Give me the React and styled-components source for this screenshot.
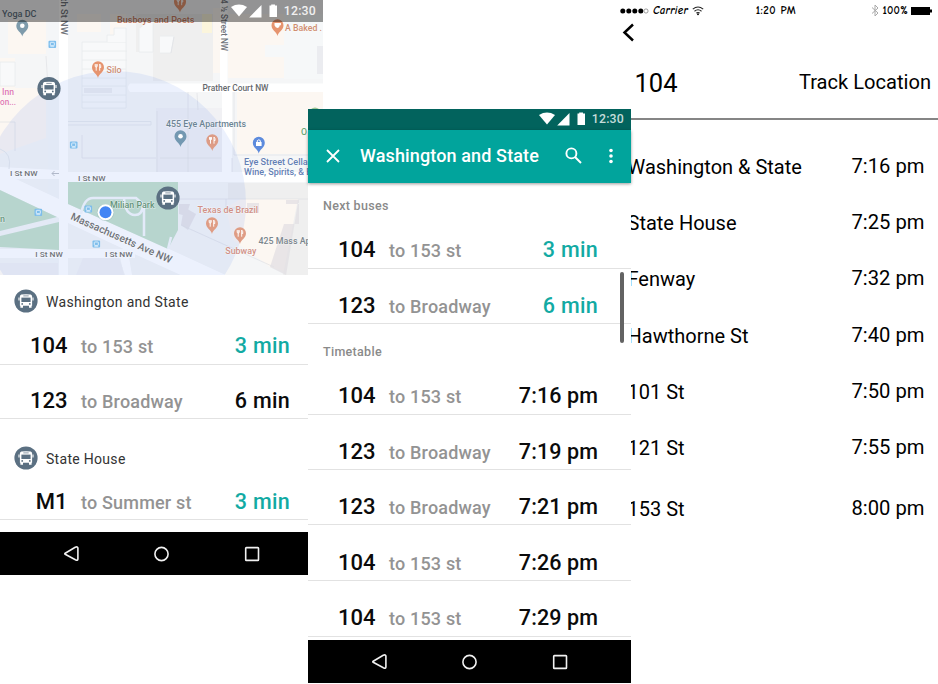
import React from "react";
import styled, { createGlobalStyle, css } from "styled-components";

const Global = createGlobalStyle`
  * { box-sizing: border-box; }
  body { margin: 0; background: #fff; overflow: hidden; font-family: Roboto, "Liberation Sans", sans-serif; }
`;

const Board = styled.main`
  display: grid;
  grid-template-columns: 308px 323px 307px;
  align-items: start;
  width: 938px;
  height: 684px;
  overflow: hidden;
`;

const NearbyPhone = styled.section`
  width: 323px;
  z-index: 1;
`;

const TimetablePhone = styled.section`
  width: 323px;
  margin-top: 109px;
  background: #fff;
  z-index: 2;
`;

const RoutePhone = styled.section`
  width: 322px;
  margin-left: -15px;
  color: #000;
`;

const MapStage = styled.div`
  display: grid;
  width: 323px;
  height: 275px;
  overflow: hidden;
  & > * { grid-area: 1 / 1; }
`;

const MapCanvas = styled.svg`
  display: block;
  width: 323px;
  height: 275px;
`;

const StatusBar = styled.div`
  display: flex;
  align-items: center;
  justify-content: flex-end;
  height: ${(p) => (p.$overMap ? 22 : 21)}px;
  padding: ${(p) => (p.$overMap ? "0 7px 0 0" : "0 7px 1px 0")};
  background: ${(p) => (p.$overMap ? "rgba(0, 0, 0, 0.4)" : "#02635d")};
  color: ${(p) => (p.$overMap ? "#f0f0f0" : "#c5dcda")};
  font-size: 12.3px;
  font-weight: 500;
  letter-spacing: 0.2px;
  svg { margin-right: 6px; }
`;

const Toolbar = styled.header`
  display: flex;
  align-items: center;
  height: 53px;
  padding: 0 17px 2px 18px;
  background: #01a49c;
  color: #fff;
  box-shadow: 0 1px 3px rgba(0, 0, 0, 0.4);
`;

const ToolbarTitle = styled.h1`
  margin: 0 0 0 20px;
  flex: 1;
  font-size: 18px;
  font-weight: 500;
  letter-spacing: 0.13px;
  white-space: nowrap;
`;

const SearchIcon = styled.svg`
  margin-right: 26px;
`;

const StopHeader = styled.div`
  display: flex;
  align-items: center;
  gap: 8px;
  height: ${(p) => p.$height}px;
  padding: ${(p) => p.$top}px 0 0 14px;
  color: #333;
  font-size: 14px;
  letter-spacing: 0.3px;
`;

const StopName = styled.span`
  padding-top: 2px;
`;

const GroupLabel = styled.div`
  height: ${(p) => p.$height}px;
  padding: ${(p) => p.$top}px 15px 0;
  color: #8a8a8a;
  font-size: 12.5px;
  font-weight: 500;
  letter-spacing: 0.3px;
  line-height: 16px;
`;

const DepartureRow = styled.div`
  display: flex;
  align-items: baseline;
  width: 323px;
  height: ${(p) => p.$height || 55.5}px;
  padding-top: ${(p) => (p.$height || 55.5) - 30.5}px;
  padding-right: 33px;
  border-bottom: 1px solid #e2e2e2;
  line-height: 24px;
  white-space: nowrap;
`;

const RouteNumber = styled.strong`
  width: 67.5px;
  color: #0b0b0b;
  text-align: right;
  font-size: 22px;
  font-weight: 500;
`;

const Destination = styled.span`
  flex: 1;
  margin-left: 13.5px;
  color: #939393;
  font-size: 18px;
  font-weight: 500;
  letter-spacing: 0.18px;
`;

const Departure = styled.span`
  color: ${(p) => (p.$live ? "#12aaa3" : "#0b0b0b")};
  font-size: 21.5px;
  font-weight: 500;
  letter-spacing: ${(p) => (p.$minutes ? 0.3 : 0.1)}px;
`;

const NavBar = styled.footer`
  display: flex;
  align-items: center;
  justify-content: space-between;
  width: 323px;
  height: 43px;
  padding: 0 62px;
  background: #000;
`;

const Gap = styled.div`
  height: ${(p) => p.$height}px;
`;

const ScrollBody = styled.div`
  display: grid;
  & > * { grid-area: 1 / 1; }
`;

const ScrollThumb = styled.div`
  justify-self: end;
  width: 4px;
  height: 71px;
  margin: 89px 7px 0 0;
  border-radius: 2px;
  background: #636363;
`;

const CarrierBar = styled.div`
  display: grid;
  grid-template-columns: 1fr auto 1fr;
  align-items: center;
  height: 21px;
  padding: 0 5px 0 3px;
  font-family: "Comic Sans MS", "Comic Neue", Lato, sans-serif;
  font-size: 11px;
  font-weight: 700;
`;

const Clock = styled.span`
  letter-spacing: 0.5px;
`;

const CarrierSide = styled.div`
  display: flex;
  align-items: center;
  gap: ${(p) => (p.$end ? 3 : 4)}px;
  justify-content: ${(p) => (p.$end ? "flex-end" : "flex-start")};
  letter-spacing: ${(p) => (p.$end ? 0.3 : 0.25)}px;
`;

const BackRow = styled.div`
  height: 30px;
  padding: 2px 0 0 5px;
`;

const RouteHeader = styled.header`
  display: flex;
  align-items: flex-start;
  justify-content: space-between;
  height: 69px;
  padding: 14px 7px 0 18.5px;
  border-bottom: 2px solid #858585;
  font-size: 20.1px;
  line-height: 36px;
`;

const TrackLink = styled.span`
  margin-top: -1px;
`;

const RouteTitle = styled.h2`
  margin: 0;
  font-size: 25.5px;
  font-weight: 400;
`;

const StopList = styled.div`
  display: flex;
  flex-direction: column;
  padding-top: 18.5px;
`;

const StopRow = styled.div`
  display: flex;
  justify-content: space-between;
  align-items: flex-start;
  height: 56.4px;
  padding: 0 13.5px 0 11.5px;
  font-size: 20px;
  line-height: 56px;
  ${(p) => p.$last && css`margin-top: 4px;`}
`;

const StopTime = styled.time`
  margin-top: -1px;
  font-size: 20.2px;
`;

function BusGlyph({ x, y }) {
  return (
    <g transform={`translate(${x} ${y})`}>
      <circle r="11.6" fill="#5b7082" />
      <path d="M-4.6-6.4Q0-7.2 4.6-6.4Q6.1-6 6.1-4.5V4.8H-6.1V-4.5Q-6.1-6 -4.6-6.4Z" fill="#fff" />
      <path d="M-5.6 4V6.8H-3V4M3 4V6.8H5.6V4" fill="#fff" />
      <path d="M-7-3.4V-.4M7-3.4V-.4" stroke="#fff" strokeWidth="1.1" />
      <path d="M-4.6-3.4H4.6V1H-4.6Z" fill="#5b7082" />
      <path d="M-2.7-5.1H2.7" stroke="#5b7082" strokeWidth=".7" />
      <circle cx="-3.8" cy="2.9" r=".9" fill="#5b7082" />
      <circle cx="3.8" cy="2.9" r=".9" fill="#5b7082" />
    </g>
  );
}

function Pin({ x, y, color = "#e6946f", kind = "food" }) {
  return (
    <g transform={`translate(${x} ${y})`}>
      <path d="M0 10.5C-.8 6.3-6 4.6-6-.3A6 6 0 0 1 6-.3C6 4.6.8 6.3 0 10.5Z" fill={color} />
      {kind === "food" && (
        <path d="M-2.8-3.4V-1Q-1.8.3-.8-1V-3.4M-1.8-3.4V3.2M1.7 3.2V-3.4Q3-2.5 2.8 0H1.7" fill="none" stroke="#fff" strokeWidth=".95" />
      )}
      {kind === "dot" && <circle r="2.3" cy="-.3" fill="#fff" />}
      {kind === "cup" && <path d="M-3-2.6H3.4V-.2H2.3Q2 2.4 0 2.4T-3-.2Z" fill="#fff" />}
      {kind === "bag" && (
        <g>
          <path d="M-2.8-1H2.8V3H-2.8Z" fill="#fff" />
          <path d="M-1.5-1V-2.4Q0-4 1.5-2.4V-1" fill="none" stroke="#fff" />
        </g>
      )}
    </g>
  );
}

function Transit({ x, y }) {
  return (
    <g transform={`translate(${x} ${y})`}>
      <rect x="-3.8" y="-3.6" width="7.6" height="7.2" rx="1" fill="#7dbdec" />
      <rect x="-2" y="-2" width="4" height="3.4" rx=".5" fill="none" stroke="#e5f3fd" strokeWidth=".9" />
      <path d="M-2 2.4H2" stroke="#e5f3fd" strokeWidth=".7" />
    </g>
  );
}

const MapLabel = styled.text`
  font-family: Roboto, sans-serif;
  font-size: ${(p) => p.$size || 8.5}px;
  font-weight: 500;
  fill: ${(p) => p.$color || "#6f737a"};
  paint-order: stroke;
  stroke: rgba(255, 255, 255, 0.55);
  stroke-width: 1px;
`;

const pins = [
  { x: 22.3, y: 26, color: "#7e9bab", kind: "dot" },
  { x: 180, y: 2 },
  { x: 277.5, y: 25.5, kind: "cup" },
  { x: 98, y: 67.5 },
  { x: 180.5, y: 136.5, color: "#7398b1", kind: "dot" },
  { x: 212.3, y: 140.5, color: "#dd9c86" },
  { x: 258.8, y: 143, color: "#5d8bdd", kind: "bag" },
  { x: 212, y: 223.5, color: "#df9c84" },
  { x: 240, y: 233.5, color: "#df9c84" },
];

const transit = [[52.3, 44.3], [73.7, 145], [38.3, 212.3], [88.3, 209], [96.3, 244]];

const labels = [
  { t: "Yoga DC", x: 2, y: 17, s: 9.3, c: "#5f7080", l: 34.5 },
  { t: "Busboys and Poets", x: 117, y: 22.5, s: 8.8, c: "#c67c62", l: 77.5 },
  { t: "A Baked .", x: 285, y: 31, s: 8.8, c: "#d08e70", l: 37 },
  { t: "Silo", x: 106.5, y: 73, s: 9, c: "#ce8d74", l: 15 },
  { t: "Inn", x: 2, y: 94.5, s: 8.8, c: "#df7ab4", l: 12 },
  { t: "on...", x: 0, y: 105, s: 8.8, c: "#df7ab4", l: 16 },
  { t: "Prather Court NW", x: 202.5, y: 91, s: 8.3, c: "#66696d", l: 66 },
  { t: "455 Eye Apartments", x: 166, y: 126.7, s: 8.8, c: "#6b8494", l: 80 },
  { t: "O", x: 301, y: 135, s: 9, c: "#68a573", l: 6 },
  { t: "Eye Street Cellar", x: 244, y: 164.7, s: 8.8, c: "#6480b5", l: 67 },
  { t: "Wine, Spirits, & B", x: 244, y: 174.7, s: 8.8, c: "#6480b5", l: 68 },
  { t: "I St NW", x: 10, y: 175.7, s: 8, l: 27.5 },
  { t: "I St NW", x: 78, y: 180.7, s: 8, l: 27.5 },
  { t: "I St NW", x: 35.3, y: 257, s: 8, l: 27.5 },
  { t: "I St NW", x: 105, y: 257.3, s: 8, l: 27.5 },
  { t: "n", x: 0, y: 221.5, s: 9, c: "#6b9a83", l: 5 },
  { t: "Milian Park", x: 110, y: 208.3, s: 8.6, c: "#64937a", l: 44.5 },
  { t: "Texas de Brazil", x: 197.5, y: 213, s: 8.8, c: "#d19187", l: 60.5 },
  { t: "Subway", x: 225.3, y: 254, s: 8.8, c: "#d19187", l: 31 },
  { t: "425 Mass Ap", x: 258.5, y: 243.7, s: 8.8, c: "#7b868d", l: 52 },
];

function CityMap() {
  return (
    <MapCanvas viewBox="0 0 323 275" aria-label="Map of nearby stops">
      <rect width="323" height="275" fill="#f5f6f7" />
      <path d="M0 58H15V88H46V54H8V20H46V138L0 154Z" fill="#fcf7f2" />
      <path d="M77 14H101V32H77ZM110 14H126V38H110ZM213 8H220V73H213ZM228 14H299V45H284V78H228ZM237 92H323V154H237ZM245 196H298V275L270 267 233 240 226 208Z" fill="#fcf7f2" />
      <path d="M48 20H59V275H48Z" fill="#f4f6f8" />
      <path d="M136 14H213V81H153V52H136Z" fill="#efefef" />
      <path d="M265 45H284V57H265ZM284 14H323V79H284Z" fill="#f6f8f9" />
      <path d="M202 14H212V33H202Z" fill="#fbf5dc" />
      <path d="M228 183H323V199H228ZM298 199H323V275H283Z" fill="#efefef" />
      <g fill="#f8f9fa" stroke="#eaecee" strokeWidth=".9">
        <path d="M82 42H126V108H82ZM82 51H127M82 60H127M82 69H126M82 78H126M82 86H126M82 95H126M82 102H126" />
        <path d="M0 62H15V86H0ZM160 36H174L171 53H160M126 42V28H114V35H107V42M139 29V52H153V18" />
      </g>
      <path d="M59 0H68V275H59ZM220 0H227.5V92H232V174H222V92H220ZM130 83.5H323V92H130Q126 87.5 130 83.5ZM68 172H323V182H68ZM0 167L59 170V179H16L59 199V218L0 190ZM68 204 167 248 230 277H185L130 252 68 223ZM0 249H135V258H0ZM120 257H129L132 275H124Z" fill="#fff" />
      <path d="M0 190 57 217 0 231ZM0 236 59 222V250L0 247ZM68 182H178V230L168 249 68 204Z" fill="#c4e0cb" />
      <path d="M0 149Q12 153 9 169M68 121.5H151V125H68" fill="none" stroke="#e6e9ec" />
      <path d="M81 214Q84 198 93 198H136L144 205V236M124 198Q125 215 135 215Q142 215 143 206M168 249 171 237" fill="none" stroke="#f5f8fb" strokeWidth="2.5" />
      <path d="M83 258H119L125 275H76ZM0 263H58V275H0ZM156 108H222V172H156Z" fill="#efeff1" opacity=".6" />
      <path d="M184 207 196 214 188 230 181 225ZM179 204H190L186 216 179 214ZM270 267 284 224H299V203H298L286 275ZM247 203H259V213H247ZM286 200H299V204H286Z" fill="#dedce0" opacity=".65" />
      <path d="M180 199H323M226 199V208H245M181 225 274 267M234 92V155H308M221 158H160M232 158V172M82 135V158H156M0 122H15V151M157 111V172M46 56 48 87M174 37 171 53M197 93 198 110M188 92V172" fill="none" stroke="#dfe1e5" strokeWidth="1" opacity=".7" />
      <path d="M317 46H323V74H317ZM84 88H112V93H84Z" fill="#ebecf0" />
      <circle cx="114" cy="203" r="132" fill="#4f82ef" opacity=".11" />
      <path d="M59 173.5H52M54.5 171 52 173.5 54.5 176" fill="none" stroke="#b1b9ca" />
      {labels.map((d) => (
        <MapLabel key={`${d.t}-${d.x}`} x={d.x} y={d.y} $size={d.s} $color={d.c} textLength={d.l} lengthAdjust="spacingAndGlyphs">{d.t}</MapLabel>
      ))}
      <MapLabel $size={8.3} x="-7" y="0" transform="translate(60.5 0) rotate(90)" textLength="42" lengthAdjust="spacingAndGlyphs">6th St NW</MapLabel>
      <MapLabel $size={8.3} x="0" y="0" transform="translate(221 -1) rotate(90)" textLength="52" lengthAdjust="spacingAndGlyphs">4 ½ Street NW</MapLabel>
      <MapLabel $size={10.4} x="0" y="0" transform="translate(70 219) rotate(23.9)" textLength="109.5" lengthAdjust="spacingAndGlyphs">Massachusetts Ave NW</MapLabel>
      {transit.map(([x, y]) => <Transit key={`${x}-${y}`} x={x} y={y} />)}
      {pins.map((p) => <Pin key={`${p.x}-${p.y}`} {...p} />)}
      <circle cx="315" cy="113" r="5.5" fill="#9cc795" />
      <circle cx="105.5" cy="212.5" r="8.6" fill="#8aa" opacity=".35" />
      <circle cx="105.5" cy="212.3" r="8" fill="#fff" />
      <circle cx="105.5" cy="212.3" r="6" fill="#4285f4" />
      <BusGlyph x={49} y={88.5} />
      <BusGlyph x={168} y={198} />
    </MapCanvas>
  );
}

function StatusIcons() {
  return (
    <svg width="47" height="14" viewBox="0 0 47 14" fill="#fff">
      <path d="M0 3Q8-1.8 16 3L8 12.5Z" />
      <path d="M30.5 1V13.5H18.2Z" />
      <path d="M38.5 1.5H40.2V.5H44V1.5H46V13H38.5Z" />
    </svg>
  );
}

function SystemNav() {
  return (
    <NavBar>
      <svg width="18" height="18" viewBox="0 0 18 18" fill="none" stroke="#f1f1f1" strokeWidth="1.6">
        <path d="M3.2 8.2 13.2 2.3Q15.9 1.2 15.9 3V14Q15.9 16 13.4 14.8L3.2 9.3Q2.4 8.7 3.2 8.2Z" />
      </svg>
      <svg width="18" height="18" viewBox="0 0 18 18" fill="none" stroke="#f1f1f1" strokeWidth="1.6">
        <circle cx="8.5" cy="9" r="6.6" />
      </svg>
      <svg width="18" height="18" viewBox="0 0 18 18" fill="none" stroke="#f1f1f1" strokeWidth="1.6">
        <rect x="2.7" y="2.6" width="12.8" height="12.8" rx=".7" />
      </svg>
    </NavBar>
  );
}

function BusRow({ route, to, at, live, ...size }) {
  return (
    <DepartureRow {...size}>
      <RouteNumber>{route}</RouteNumber>
      <Destination>to {to}</Destination>
      <Departure $live={live} $minutes={at.endsWith("min")}>{at}</Departure>
    </DepartureRow>
  );
}

function StopTitle({ name, ...size }) {
  return (
    <StopHeader {...size}>
      <svg width="24" height="24" viewBox="-12 -12 24 24"><BusGlyph x={0} y={0} /></svg>
      <StopName>{name}</StopName>
    </StopHeader>
  );
}

const timetable = [
  ["104", "153 st", "7:16 pm", 55.5],
  ["123", "Broadway", "7:19 pm", 55.5],
  ["123", "Broadway", "7:21 pm", 55],
  ["104", "153 st", "7:26 pm", 56],
  ["104", "153 st", "7:29 pm", 55.5],
];

const routeStops = [
  ["Washington & State", "7:16 pm"],
  ["State House", "7:25 pm"],
  ["Fenway", "7:32 pm"],
  ["Hawthorne St", "7:40 pm"],
  ["101 St", "7:50 pm"],
  ["121 St", "7:55 pm"],
  ["153 St", "8:00 pm"],
];

export default function App() {
  return (
    <>
      <Global />
      <Board>
        <NearbyPhone>
          <MapStage>
            <CityMap />
            <StatusBar $overMap><StatusIcons />12:30</StatusBar>
          </MapStage>
          <StopTitle name="Washington and State" $height={50} $top={1} />
          <BusRow route="104" to="153 st" at="3 min" live $height={39.5} />
          <BusRow route="123" to="Broadway" at="6 min" $height={54.5} />
          <StopTitle name="State House" $height={60.5} $top={18} />
          <BusRow route="M1" to="Summer st" at="3 min" live $height={40.5} />
          <Gap $height={12} />
          <SystemNav />
        </NearbyPhone>

        <TimetablePhone>
          <StatusBar><StatusIcons />12:30</StatusBar>
          <Toolbar>
            <svg width="14" height="14" viewBox="0 0 14 14" stroke="#fff" strokeWidth="1.8"><path d="M1 1 13 13M13 1 1 13" /></svg>
            <ToolbarTitle>Washington and State</ToolbarTitle>
            <SearchIcon width="17" height="17" viewBox="0 0 17 17" fill="none" stroke="#fff" strokeWidth="1.9">
              <circle cx="6.4" cy="6.4" r="5" /><path d="M10 10 16 16" />
            </SearchIcon>
            <svg width="6" height="16" viewBox="0 0 6 16" fill="#fff">
              <circle cx="3" cy="2.5" r="1.8" /><circle cx="3" cy="8" r="1.8" /><circle cx="3" cy="13.5" r="1.8" />
            </svg>
          </Toolbar>
          <ScrollBody>
            <div>
              <GroupLabel $height={30} $top={15}>Next buses</GroupLabel>
              <BusRow route="104" to="153 st" at="3 min" live />
              <BusRow route="123" to="Broadway" at="6 min" live />
              <GroupLabel $height={35} $top={20}>Timetable</GroupLabel>
              {timetable.map(([route, to, at, h]) => (
                <BusRow key={at} route={route} to={to} at={at} $height={h} />
              ))}
              <Gap $height={3.5} />
            </div>
            <ScrollThumb />
          </ScrollBody>
          <SystemNav />
        </TimetablePhone>

        <RoutePhone>
          <CarrierBar>
            <CarrierSide>
              <svg width="30" height="8" viewBox="0 0 30 8">
                {[3, 9, 15, 21].map((x) => <circle key={x} cx={x + 0.8} cy="4" r="2.5" />)}
                <circle cx="27" cy="4" r="2.1" fill="none" stroke="#777" strokeWidth=".7" />
              </svg>
              <em>Carrier</em>
              <svg width="12" height="10" viewBox="0 0 12 10" fill="none" stroke="#222" strokeWidth="1.1">
                <path d="M.8 3.2Q6-1.3 11.2 3.2M2.5 5.2Q6 2.4 9.5 5.2M4.3 7.2Q6 5.8 7.7 7.2" />
                <circle cx="6" cy="8.3" r=".5" fill="#222" />
              </svg>
            </CarrierSide>
            <Clock>1:20 PM</Clock>
            <CarrierSide $end>
              <svg width="8" height="13" viewBox="0 0 8 13" fill="none" stroke="#a8a8a8" strokeWidth="1">
                <path d="M1 3.5 7 9 4 12V1L7 4 1 9.5" />
              </svg>
              100%
              <svg width="22" height="8" viewBox="0 0 22 8"><path d="M0 0H19V2.5H21V5.5H19V8H0Z" /></svg>
            </CarrierSide>
          </CarrierBar>
          <BackRow>
            <svg width="14" height="19" viewBox="0 0 14 19" fill="none" stroke="#000" strokeWidth="2.5"><path d="M12 1.5 3.5 9.5 12 17.5" /></svg>
          </BackRow>
          <RouteHeader>
            <RouteTitle>104</RouteTitle>
            <TrackLink>Track Location</TrackLink>
          </RouteHeader>
          <StopList>
            {routeStops.map(([name, at], i) => (
              <StopRow key={name} $last={i === 6}>
                <span>{name}</span>
                <StopTime>{at}</StopTime>
              </StopRow>
            ))}
          </StopList>
        </RoutePhone>
      </Board>
    </>
  );
}
